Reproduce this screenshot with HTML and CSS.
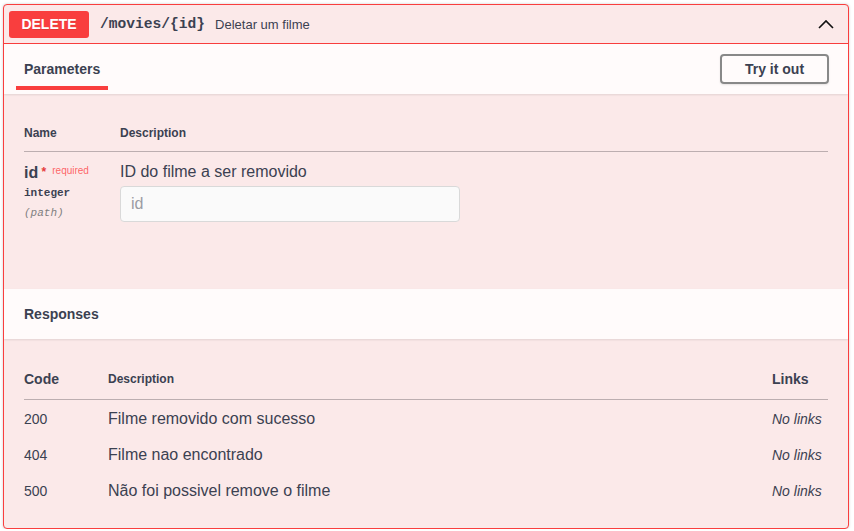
FILE: index.html
```html
<!DOCTYPE html>
<html>
<head>
<meta charset="utf-8">
<link rel="stylesheet" href="styles.css">
</head>
<body>
<div class="opblock">
  <div class="summary">
    <span class="method">DELETE</span>
    <span class="path">/movies/{id}</span>
    <span class="summary-desc">Deletar um filme</span>
    <svg class="chevron" width="20" height="20" viewBox="0 0 20 20"><polyline points="3,14 10,7 17,14" fill="none" stroke="#111" stroke-width="1.6"/></svg>
  </div>
  <div class="section-header">
    <div class="tab"><span>Parameters</span></div>
    <button class="try">Try it out</button>
  </div>
  <div class="params">
    <table class="ptable">
      <thead><tr><th class="col-name">Name</th><th>Description</th></tr></thead>
      <tbody>
        <tr>
          <td class="col-name">
            <div class="pname">id<span class="star">&nbsp;*</span><span class="req">required</span></div>
            <div class="ptype">integer</div>
            <div class="pin">(path)</div>
          </td>
          <td>
            <p class="pdesc">ID do filme a ser removido</p>
            <input class="pinput" type="text" placeholder="id">
          </td>
        </tr>
      </tbody>
    </table>
  </div>
  <div class="section-header resp-header">
    <h4>Responses</h4>
  </div>
  <div class="responses">
    <table class="rtable">
      <thead><tr><th class="col-code">Code</th><th class="col-desc">Description</th><th class="col-links">Links</th></tr></thead>
      <tbody>
        <tr><td class="code">200</td><td class="rdesc">Filme removido com sucesso</td><td class="nolinks">No links</td></tr>
        <tr><td class="code">404</td><td class="rdesc">Filme nao encontrado</td><td class="nolinks">No links</td></tr>
        <tr><td class="code">500</td><td class="rdesc">Não foi possivel remove o filme</td><td class="nolinks">No links</td></tr>
      </tbody>
    </table>
  </div>
</div>
</body>
</html>
```

FILE: styles.css
```css
* { box-sizing: border-box; }
body {
  margin: 0;
  background: #fff;
  font-family: "Liberation Sans", Arial, sans-serif;
  color: #3b4151;
}
.opblock {
  margin: 4px 5px 0 3px;
  border: 1px solid #f93e3e;
  border-radius: 4px;
  background: #fbe9e9;
  box-shadow: 0 0 3px rgba(0,0,0,.19);
  height: 525px;
  overflow: hidden;
}
.summary {
  display: flex;
  align-items: center;
  padding: 5px 4px 5px 5px;
  border-bottom: 1px solid #f93e3e;
  height: 39px;
}
.method {
  background: #f93e3e;
  color: #fff;
  font-weight: 700;
  font-size: 14px;
  width: 80px;
  height: 27px;
  line-height: 27px;
  text-align: center;
  border-radius: 3px;
  text-shadow: 0 1px 0 rgba(0,0,0,.1);
}
.path {
  font-family: "Liberation Mono", "DejaVu Sans Mono", monospace;
  font-weight: 700;
  font-size: 14.6px;
  padding: 0 10px 0 11px;
  color: #3b4151;
}
.summary-desc {
  font-size: 13px;
  color: #3b4151;
}
.chevron {
  margin-left: auto;
  margin-right: 8px;
}
.section-header {
  display: flex;
  align-items: center;
  justify-content: space-between;
  background: #fffbfb;
  box-shadow: 0 1px 2px rgba(0,0,0,.1);
  height: 50px;
  padding: 0 19px 0 12px;
  position: relative;
}
.tab {
  align-self: stretch;
  display: flex;
  align-items: center;
  padding: 0 8px;
  position: relative;
  font-size: 14px;
  font-weight: 700;
}
.tab::after {
  content: "";
  position: absolute;
  left: 0;
  right: 0;
  bottom: 4px;
  height: 4px;
  background: #f93e3e;
}
.try {
  font-family: "Liberation Sans", Arial, sans-serif;
  font-size: 14px;
  font-weight: 700;
  color: #3b4151;
  background: transparent;
  border: 2px solid #888;
  border-radius: 4px;
  width: 109px;
  height: 30px;
  padding: 0;
  box-shadow: 0 1px 2px rgba(0,0,0,.1);
}
.params {
  padding: 20px 20px 0 20px;
  height: 195px;
}
table {
  width: 100%;
  border-collapse: collapse;
}
.ptable th {
  text-align: left;
  font-size: 12px;
  font-weight: 700;
  padding: 12px 0 11px 0;
  border-bottom: 1px solid #bcaeb0;
  line-height: 14px;
}
.ptable .col-name { width: 96px; padding-left: 0; }
.ptable th:first-child, .ptable td:first-child { padding-left: 0; }
.ptable td {
  vertical-align: top;
  padding: 11px 0 10px 0;
}
.pname {
  font-size: 16px;
  font-weight: 700;
  line-height: 18px;
  margin-top: 1px;
}
.star {
  color: #e53b3b;
  font-size: 12px;
  vertical-align: top;
  position: relative;
  top: -1px;
}
.req {
  color: rgba(255,0,0,.6);
  font-size: 10px;
  font-weight: 400;
  vertical-align: top;
  position: relative;
  top: -2px;
  padding-left: 6px;
}
.ptype {
  font-family: "Liberation Mono", "DejaVu Sans Mono", monospace;
  font-size: 11px;
  font-weight: 700;
  margin-top: 4px;
  line-height: 14px;
}
.pin {
  font-family: "Liberation Mono", "DejaVu Sans Mono", monospace;
  font-size: 11px;
  font-style: italic;
  color: gray;
  margin-top: 6px;
  line-height: 14px;
}
.pdesc {
  margin: 0;
  font-size: 16px;
  line-height: 18px;
  margin-top: 0;
}
.pinput {
  display: block;
  margin-top: 5px;
  width: 340px;
  height: 36px;
  border: 1px solid #d9d9d9;
  border-radius: 4px;
  background: #fafafa;
  padding: 8px 10px;
  font-family: "Liberation Sans", Arial, sans-serif;
  font-size: 16px;
  color: #3b4151;
}
.pinput::placeholder { color: #9a9ca3; }
.resp-header {
  padding: 0 20px;
}
.resp-header h4 {
  margin: 0;
  font-size: 14px;
  font-weight: 700;
}
.responses {
  padding: 20px 20px 20px 20px;
}
.rtable th {
  text-align: left;
  padding: 12px 0;
  line-height: 16px;
  border-bottom: 1px solid #bcaeb0;
  font-weight: 700;
}
.rtable .col-code { width: 84px; font-size: 14px; }
.rtable .col-desc { font-size: 12px; }
.rtable .col-links { width: 56px; font-size: 14px; }
.rtable td {
  padding: 11px 0 9px 0;
  line-height: 16px;
  vertical-align: middle;
}
.code { font-size: 14px; }
.rdesc { font-size: 16px; }
.nolinks { font-size: 14px; font-style: italic; color: #3b4151; }
```
